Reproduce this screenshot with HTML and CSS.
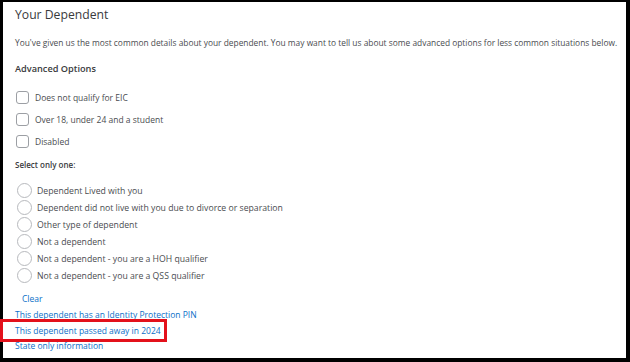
FILE: index.html
```html
<!DOCTYPE html>
<html lang="en">
  <head>
    <meta charset="utf-8" />
    <title>Your Dependent</title>
    <link rel="stylesheet" href="styles.css">
  </head>
  <body>
    <div class="frame">
      <h1>Your Dependent</h1>
      <p class="intro">You've given us the most common details about your dependent. You may want to tell us about some advanced options for less common situations below.</p>

      <h2>Advanced Options</h2>
      <ul class="checks">
        <li><span class="box"></span>Does not qualify for EIC</li>
        <li><span class="box"></span>Over 18, under 24 and a student</li>
        <li><span class="box"></span>Disabled</li>
      </ul>

      <h3>Select only one:</h3>
      <ul class="radios">
        <li><span class="circle"></span>Dependent Lived with you</li>
        <li><span class="circle"></span>Dependent did not live with you due to divorce or separation</li>
        <li><span class="circle"></span>Other type of dependent</li>
        <li><span class="circle"></span>Not a dependent</li>
        <li><span class="circle"></span>Not a dependent - you are a HOH qualifier</li>
        <li><span class="circle"></span>Not a dependent - you are a QSS qualifier</li>
      </ul>

      <a class="clear" href="#">Clear</a>
      <div class="links">
        <a href="#">This dependent has an Identity Protection PIN</a>
        <a href="#" class="marked">This dependent passed away in 2024</a>
        <a href="#">State only information</a>
      </div>
    </div>
  </body>
</html>
```

FILE: styles.css
```css
html, body {
  margin: 0;
  height: 100%;
}

body {
  font-family: "Open Sans", "Liberation Sans", sans-serif;
  color: #393a3d;
  background: #000;
}

.frame {
  box-sizing: border-box;
  margin: 2px 4px 4px 3px;
  height: calc(100% - 6px);
  background: #fff;
  padding: 1px 0 0 12px;
}

h1 {
  margin: 0;
  font-size: 12.2px;
  font-weight: 400;
  line-height: 24px;
}

.intro {
  margin: 10px 0 0;
  font-size: 8.4px;
  line-height: 12px;
  white-space: nowrap;
  color: #4a4c50;
}

h2 {
  margin: 13px 0 0;
  font-size: 9.2px;
  font-weight: 600;
  line-height: 14px;
}

ul {
  list-style: none;
  margin: 0;
  padding: 0;
}

.checks {
  margin-top: 10px;
}

.checks li {
  display: flex;
  align-items: center;
  height: 22px;
  font-size: 8.5px;
  color: #4a4c50;
}

.box {
  box-sizing: border-box;
  width: 13px;
  height: 13px;
  margin: 0 6px 0 1px;
  border: 1px solid #9c9fa4;
  border-radius: 3px;
}

h3 {
  margin: 2px 0 0;
  font-size: 8px;
  font-weight: 600;
  line-height: 22px;
}

.radios {
  margin-top: 6px;
}

.radios li {
  display: flex;
  align-items: center;
  height: 17px;
  font-size: 8.7px;
  color: #4a4c50;
}

.circle {
  box-sizing: border-box;
  width: 15px;
  height: 15px;
  margin: 0 5px 0 2px;
  border: 1px solid #b7b9bd;
  border-radius: 50%;
}

a {
  color: #0b6fc8;
  text-decoration: none;
  font-size: 8.5px;
}

.clear {
  display: block;
  margin: 7px 0 0 7px;
  line-height: 16px;
}

.links a {
  display: block;
  width: max-content;
  line-height: 15.5px;
}

.marked {
  position: relative;
}

.marked::after {
  content: "";
  position: absolute;
  left: -15px;
  right: -6px;
  top: -4px;
  bottom: -4px;
  border: 3px solid #e3111b;
}
```
